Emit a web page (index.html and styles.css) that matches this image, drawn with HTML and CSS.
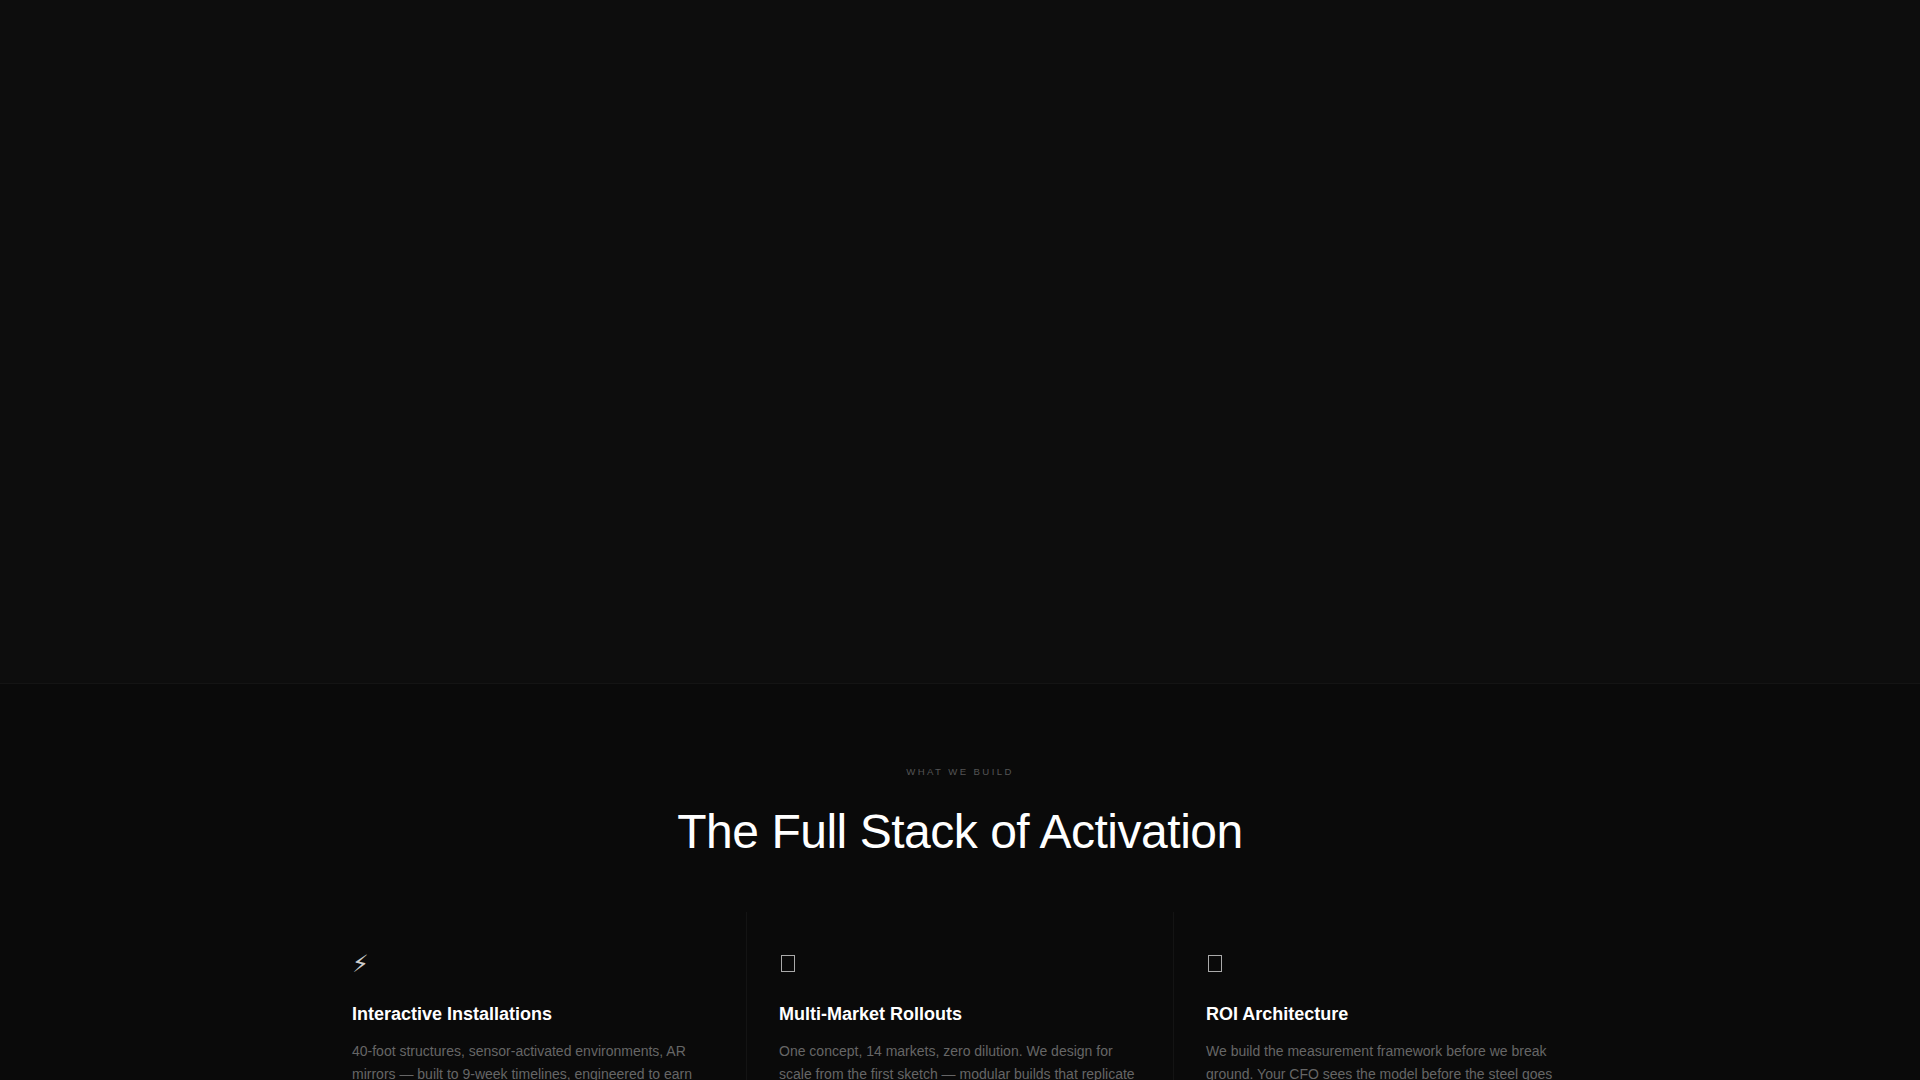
FILE: index.html
```html
<!DOCTYPE html>
<html lang="en">
<head>
    <meta charset="UTF-8">
    <meta name="viewport" content="width=device-width, initial-scale=1.0">
    <title>The Full Stack of Activation</title>
    <link rel="stylesheet" href="styles.css">
</head>
<body>
    <section class="hero"></section>

    <section class="services">
        <p class="eyebrow">What We Build</p>
        <h2>The Full Stack of Activation</h2>

        <div class="service-grid">
            <div class="service-card">
                <div class="service-icon">⚡&#xFE0E;</div>
                <h3>Interactive Installations</h3>
                <p>40-foot structures, sensor-activated environments, AR mirrors — built to 9-week timelines, engineered to earn</p>
            </div>
            <div class="service-card">
                <div class="service-icon"><span class="missing-glyph"></span></div>
                <h3>Multi-Market Rollouts</h3>
                <p>One concept, 14 markets, zero dilution. We design for scale from the first sketch — modular builds that replicate</p>
            </div>
            <div class="service-card">
                <div class="service-icon"><span class="missing-glyph"></span></div>
                <h3>ROI Architecture</h3>
                <p>We build the measurement framework before we break ground. Your CFO sees the model before the steel goes</p>
            </div>
        </div>
    </section>
</body>
</html>
```

FILE: styles.css
```css
* {
    box-sizing: border-box;
}
html, body {
    height: 100%;
}
body {
    font-family: "Liberation Sans", Arial, sans-serif;
    background-color: #0a0a0a;
    color: #fff;
    margin: 0;
    overflow: hidden;
}
.hero {
    height: 684px;
    background-color: #0d0d0d;
    border-bottom: 1px solid #141414;
}
.services {
    padding: 80px 0;
}
.eyebrow {
    text-align: center;
    font-size: 9.6px;
    line-height: 15px;
    letter-spacing: 0.25em;
    text-transform: uppercase;
    color: #555;
    margin: 0 0 24px;
}
h2 {
    text-align: center;
    font-size: 48px;
    line-height: 1.2;
    font-weight: 400;
    letter-spacing: -0.01em;
    margin: 0 0 51px;
}
.service-grid {
    display: grid;
    grid-template-columns: repeat(3, 1fr);
    gap: 1px;
    max-width: 1280px;
    margin: 0 auto;
    background-color: #141414;
}
.service-card {
    padding: 40px 32px;
    background-color: #0a0a0a;
}
.service-icon {
    display: flex;
    font-family: "DejaVu Sans", sans-serif;
    font-size: 24px;
    line-height: 24px;
    height: 24px;
    margin-bottom: 28px;
    color: #ccc;
}
.missing-glyph {
    width: 14px;
    height: 17px;
    margin: 3px 0 0 2px;
    border: 1px solid #aaa;
}
h3 {
    font-size: 18px;
    line-height: 1.2;
    font-weight: 700;
    margin: 0 0 15px;
}
.service-card p {
    font-size: 14px;
    line-height: 1.6;
    color: #666;
    margin: 0;
}
```
